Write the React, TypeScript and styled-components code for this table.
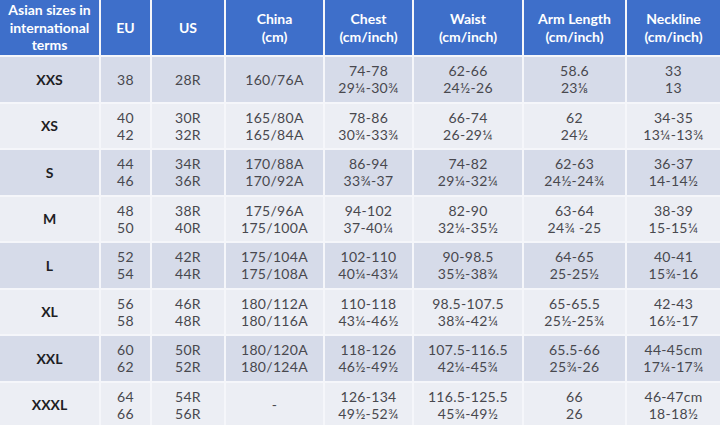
import React from "react";
import styled, { createGlobalStyle } from "styled-components";

const Global = createGlobalStyle`
  html, body { margin: 0; padding: 0; background: #f5f6fa; }
  body { font-family: "Lato", "Open Sans", sans-serif; }
`;

const Table = styled.div`
  display: grid;
  width: 720px;
  height: 425px;
  overflow: hidden;
  grid-template-columns: 99px 49px 72px 97px 87px 108px 101px 93px;
  grid-template-rows: 55px repeat(8, 44.5px);
  gap: 2px;
  background: #f5f6fa;
`;

const HeadCell = styled.div`
  background: #3e6fca;
  color: #ffffff;
  font-weight: 700;
  font-size: 14px;
  line-height: 17.5px;
  display: flex;
  flex-direction: column;
  align-items: center;
  justify-content: center;
  text-align: center;
`;

const Cell = styled.div<{ $shade: boolean; $first?: boolean }>`
  background: ${(p) => (p.$shade ? "#d6dbe9" : "#eceef4")};
  color: ${(p) => (p.$first ? "#1e1e24" : "#48484e")};
  font-weight: ${(p) => (p.$first ? 700 : 400)};
  font-size: 14px;
  letter-spacing: ${(p) => (p.$first ? "0" : "0.3px")};
  line-height: 17px;
  display: flex;
  flex-direction: column;
  align-items: center;
  justify-content: center;
  text-align: center;
`;

const headers: string[][] = [
  ["Asian sizes in", "international", "terms"],
  ["EU"],
  ["US"],
  ["China", "(cm)"],
  ["Chest", "(cm/inch)"],
  ["Waist", "(cm/inch)"],
  ["Arm Length", "(cm/inch)"],
  ["Neckline", "(cm/inch)"],
];

const rows: string[][][] = [
  [["XXS"], ["38"], ["28R"], ["160/76A"], ["74-78", "29¼-30¾"], ["62-66", "24½-26"], ["58.6", "23⅛"], ["33", "13"]],
  [["XS"], ["40", "42"], ["30R", "32R"], ["165/80A", "165/84A"], ["78-86", "30¾-33¾"], ["66-74", "26-29¼"], ["62", "24½"], ["34-35", "13¼-13¾"]],
  [["S"], ["44", "46"], ["34R", "36R"], ["170/88A", "170/92A"], ["86-94", "33¾-37"], ["74-82", "29¼-32¼"], ["62-63", "24½-24¾"], ["36-37", "14-14½"]],
  [["M"], ["48", "50"], ["38R", "40R"], ["175/96A", "175/100A"], ["94-102", "37-40¼"], ["82-90", "32¼-35½"], ["63-64", "24¾ -25"], ["38-39", "15-15¼"]],
  [["L"], ["52", "54"], ["42R", "44R"], ["175/104A", "175/108A"], ["102-110", "40¼-43¼"], ["90-98.5", "35½-38¾"], ["64-65", "25-25½"], ["40-41", "15¾-16"]],
  [["XL"], ["56", "58"], ["46R", "48R"], ["180/112A", "180/116A"], ["110-118", "43¼-46½"], ["98.5-107.5", "38¾-42¼"], ["65-65.5", "25½-25¾"], ["42-43", "16½-17"]],
  [["XXL"], ["60", "62"], ["50R", "52R"], ["180/120A", "180/124A"], ["118-126", "46½-49½"], ["107.5-116.5", "42¼-45¾"], ["65.5-66", "25¾-26"], ["44-45cm", "17¼-17¾"]],
  [["XXXL"], ["64", "66"], ["54R", "56R"], ["-"], ["126-134", "49½-52¾"], ["116.5-125.5", "45¾-49½"], ["66", "26"], ["46-47cm", "18-18½"]],
];

export default function App() {
  return (
    <>
      <Global />
      <Table>
        {headers.map((h, i) => (
          <HeadCell key={`h${i}`}>
            {h.map((l, j) => (
              <span key={j}>{l}</span>
            ))}
          </HeadCell>
        ))}
        {rows.map((r, ri) =>
          r.map((c, ci) => (
            <Cell key={`${ri}-${ci}`} $shade={ri % 2 === 0} $first={ci === 0}>
              {c.map((l, j) => (
                <span key={j}>{l}</span>
              ))}
            </Cell>
          ))
        )}
      </Table>
    </>
  );
}
